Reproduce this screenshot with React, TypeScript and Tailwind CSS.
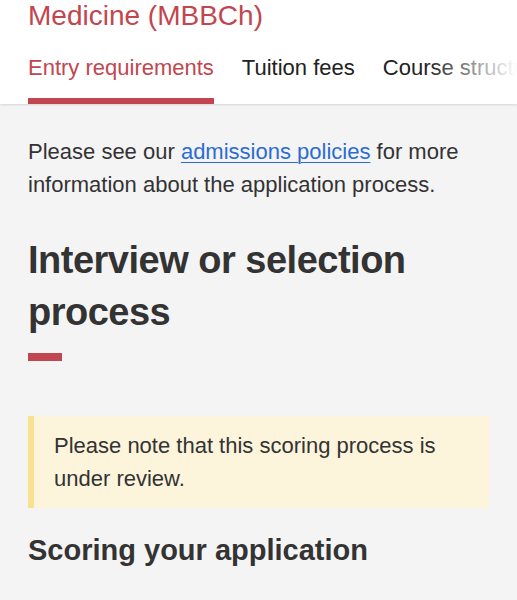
export default function App() {
  return (
    <div
      className="min-h-[600px] bg-[#f4f4f4] text-[#333333]"
      style={{ fontFamily: '"Liberation Sans", Arial, sans-serif' }}
    >
      <header className="bg-white shadow-[0_1px_2px_rgba(0,0,0,0.12)]">
        <h1 className="px-[28px] pt-[2px] text-[28px] leading-[28px] text-[#c1464f]">
          Medicine (MBBCh)
        </h1>
        <nav className="relative mt-[26px] overflow-hidden">
          <ul className="flex gap-[28px] px-[28px] whitespace-nowrap text-[22px] leading-[24px]">
            <li className="border-b-[6px] border-[#c1464f] pb-[18px] text-[#c1464f]">
              Entry requirements
            </li>
            <li className="pb-[24px] text-[#222222]">Tuition fees</li>
            <li className="pb-[24px] text-[#222222]">Course structure</li>
          </ul>
          <div className="pointer-events-none absolute right-0 top-0 h-full w-[90px] bg-gradient-to-r from-white/0 to-white" />
        </nav>
      </header>

      <main className="px-[28px] pt-[31px]">
        <p className="text-[22px] leading-[33px] text-[#333333]">
          Please see our{" "}
          <a href="#" className="text-[#2b6cd4] underline underline-offset-[3px] decoration-1">
            admissions policies
          </a>{" "}
          for more information about the application process.
        </p>

        <h2 className="mt-[33px] text-[38px] leading-[52px] font-bold tracking-[-0.5px] text-[#333333]">
          Interview or selection process
        </h2>
        <div className="mt-[15px] h-[8px] w-[34px] bg-[#c1464f]" />

        <div className="mt-[55px] border-l-[6px] border-[#f8e190] bg-[#fcf5dc] py-[13px] pl-[20px] pr-[20px]">
          <p className="text-[22px] leading-[33px] text-[#333333]">
            Please note that this scoring process is under review.
          </p>
        </div>

        <h3 className="mt-[24px] text-[29px] leading-[36px] font-bold text-[#333333]">
          Scoring your application
        </h3>
      </main>
    </div>
  );
}
